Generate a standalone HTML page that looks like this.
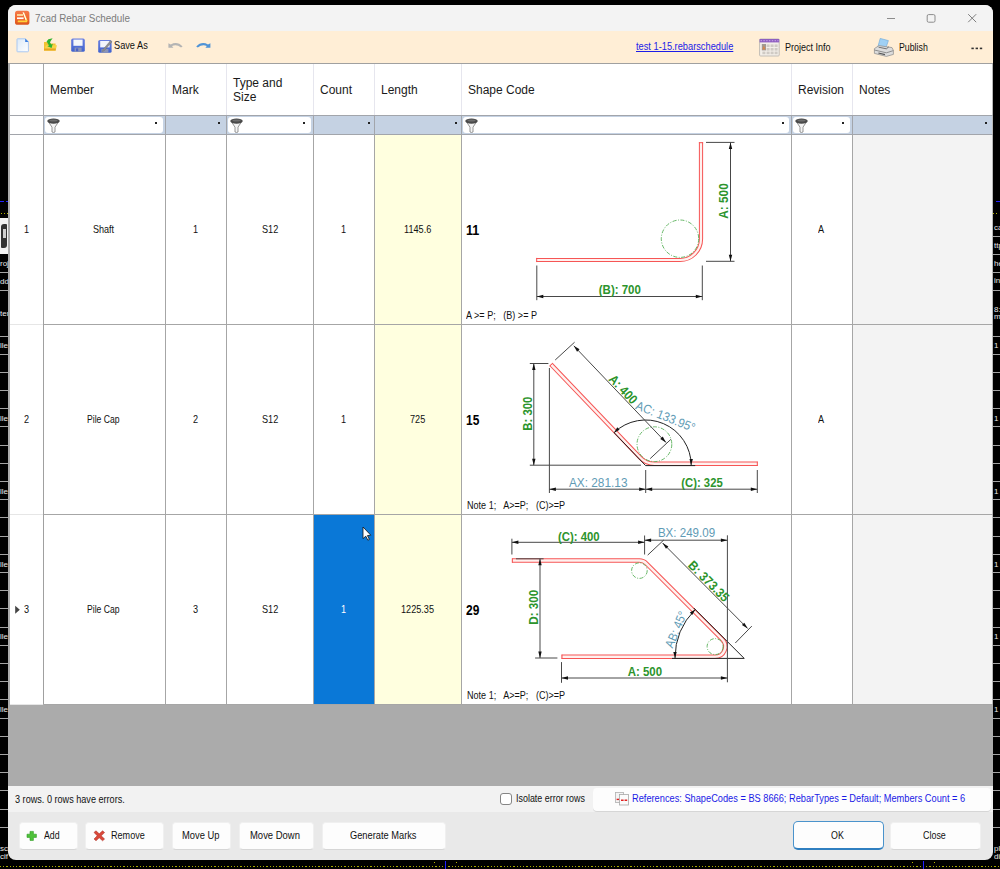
<!DOCTYPE html>
<html>
<head>
<meta charset="utf-8">
<title>7cad Rebar Schedule</title>
<style>
html,body{margin:0;padding:0;}
body{width:1000px;height:869px;background:#000;position:relative;overflow:hidden;font-family:"Liberation Sans",sans-serif;font-size:11px;color:#111;}
.abs{position:absolute;}
#win{position:absolute;left:8px;top:5px;width:985px;height:855px;background:#e9e9e9;border-radius:8px;overflow:hidden;}
#title{position:absolute;left:0;top:0;width:985px;height:26px;background:#f3f3f3;}
#tool{position:absolute;left:0;top:26px;width:985px;height:32px;background:#ffeed6;}
.v{position:absolute;width:1px;}
.h{position:absolute;height:1px;}
.hd{position:absolute;margin-top:0.4px;font-size:12px;color:#1a1a1a;line-height:14px;white-space:nowrap;}
.tx{position:absolute;white-space:pre;line-height:1;transform-origin:0 0;}
.btn{position:absolute;box-sizing:border-box;background:#fdfdfd;border:1px solid #f0f0f0;border-bottom-color:#d6d6d6;border-radius:4px;}
.fbox{position:absolute;background:#fff;border-radius:3px;height:16px;top:117px;}
.dot{position:absolute;width:2px;height:2px;background:#222;top:122px;}
svg{position:absolute;left:0;top:0;overflow:visible;}
svg text{font-family:"Liberation Sans",sans-serif;}
</style>
</head>
<body>
<div id="bg">
<div class="abs" style="left:0;top:866px;width:1000px;height:1px;background:repeating-linear-gradient(90deg,#a8a800 0,#a8a800 1.2px,#000 1.2px,#000 3.25px);"></div>
<div class="abs" style="left:923px;top:861px;width:1px;height:8px;background:#2020ff;"></div>
<div class="abs" style="left:445px;top:861px;width:1px;height:8px;background:#2020ff;"></div>
<div class="abs" style="left:434px;top:862px;width:1px;height:1px;background:#b4b400;"></div><div class="abs" style="left:456px;top:862px;width:1px;height:1px;background:#b4b400;"></div>
<div class="abs" style="left:912px;top:862px;width:1px;height:1px;background:#b4b400;"></div><div class="abs" style="left:934px;top:862px;width:1px;height:1px;background:#b4b400;"></div>
<div class="abs" style="left:0;top:201px;width:8px;height:1px;background:repeating-linear-gradient(90deg,#2222ff 0,#2222ff 4px,#000 4px,#000 6px);"></div>
<div class="abs" style="left:1px;top:213px;width:7px;height:1px;background:repeating-linear-gradient(90deg,#b4b400 0,#b4b400 1.5px,#000 1.5px,#000 3px);"></div>
<div class="abs" style="left:0;top:218px;width:8px;height:36px;background:#f2f2f2;"></div>
<div class="abs" style="left:1px;top:224px;width:6px;height:24px;background:#333;border-radius:3px 1px 3px 1px;"></div>
<div class="abs" style="left:3px;top:229px;width:3px;height:9px;background:#cfcfcf;"></div>
<div class="abs" style="left:0;top:272.4px;width:8px;height:1px;background:#a4a4a4;"></div>
<div class="abs" style="left:0;top:290.1px;width:8px;height:1px;background:#a4a4a4;"></div>
<div class="abs" style="left:0;top:336.0px;width:8px;height:1px;background:#a4a4a4;"></div>
<div class="abs" style="left:0;top:353.5px;width:8px;height:1px;background:#a4a4a4;"></div>
<div class="abs" style="left:0;top:371.7px;width:8px;height:1px;background:#a4a4a4;"></div>
<div class="abs" style="left:0;top:389.9px;width:8px;height:1px;background:#a4a4a4;"></div>
<div class="abs" style="left:0;top:408.1px;width:8px;height:1px;background:#a4a4a4;"></div>
<div class="abs" style="left:0;top:426.3px;width:8px;height:1px;background:#a4a4a4;"></div>
<div class="abs" style="left:0;top:444.5px;width:8px;height:1px;background:#a4a4a4;"></div>
<div class="abs" style="left:0;top:462.7px;width:8px;height:1px;background:#a4a4a4;"></div>
<div class="abs" style="left:0;top:480.9px;width:8px;height:1px;background:#a4a4a4;"></div>
<div class="abs" style="left:0;top:499.1px;width:8px;height:1px;background:#a4a4a4;"></div>
<div class="abs" style="left:0;top:517.3px;width:8px;height:1px;background:#a4a4a4;"></div>
<div class="abs" style="left:0;top:535.5px;width:8px;height:1px;background:#a4a4a4;"></div>
<div class="abs" style="left:0;top:553.7px;width:8px;height:1px;background:#a4a4a4;"></div>
<div class="abs" style="left:0;top:571.9px;width:8px;height:1px;background:#a4a4a4;"></div>
<div class="abs" style="left:0;top:590.1px;width:8px;height:1px;background:#a4a4a4;"></div>
<div class="abs" style="left:0;top:608.3px;width:8px;height:1px;background:#a4a4a4;"></div>
<div class="abs" style="left:0;top:626.5px;width:8px;height:1px;background:#a4a4a4;"></div>
<div class="abs" style="left:0;top:644.7px;width:8px;height:1px;background:#a4a4a4;"></div>
<div class="abs" style="left:0;top:662.9px;width:8px;height:1px;background:#a4a4a4;"></div>
<div class="abs" style="left:0;top:681.1px;width:8px;height:1px;background:#a4a4a4;"></div>
<div class="abs" style="left:0;top:699.3px;width:8px;height:1px;background:#a4a4a4;"></div>
<div class="abs" style="left:0;top:717.5px;width:8px;height:1px;background:#a4a4a4;"></div>
<div class="abs" style="left:0;top:735.7px;width:8px;height:1px;background:#a4a4a4;"></div>
<div class="abs" style="left:0;top:753.9px;width:8px;height:1px;background:#a4a4a4;"></div>
<div class="abs" style="left:0;top:772.1px;width:8px;height:1px;background:#a4a4a4;"></div>
<div class="abs" style="left:0;top:790.3px;width:8px;height:1px;background:#a4a4a4;"></div>
<div class="abs" style="left:0;top:808.5px;width:8px;height:1px;background:#a4a4a4;"></div>
<div class="abs" style="left:0;top:826.7px;width:8px;height:1px;background:#a4a4a4;"></div>
<div class="abs" style="left:0;top:259.0px;width:8px;overflow:hidden;font-size:8px;line-height:9px;color:#e8e8e8;white-space:nowrap;">roj</div>
<div class="abs" style="left:0;top:277.0px;width:8px;overflow:hidden;font-size:8px;line-height:9px;color:#e8e8e8;white-space:nowrap;">dd</div>
<div class="abs" style="left:0;top:309.0px;width:8px;overflow:hidden;font-size:8px;line-height:9px;color:#e8e8e8;white-space:nowrap;">ten</div>
<div class="abs" style="left:0;top:341.0px;width:8px;overflow:hidden;font-size:8px;line-height:9px;color:#e8e8e8;white-space:nowrap;">lle</div>
<div class="abs" style="left:0;top:414.0px;width:8px;overflow:hidden;font-size:8px;line-height:9px;color:#e8e8e8;white-space:nowrap;">lle</div>
<div class="abs" style="left:0;top:486.8px;width:8px;overflow:hidden;font-size:8px;line-height:9px;color:#e8e8e8;white-space:nowrap;">lle</div>
<div class="abs" style="left:0;top:559.6px;width:8px;overflow:hidden;font-size:8px;line-height:9px;color:#e8e8e8;white-space:nowrap;">lle</div>
<div class="abs" style="left:0;top:632.4px;width:8px;overflow:hidden;font-size:8px;line-height:9px;color:#e8e8e8;white-space:nowrap;">lle</div>
<div class="abs" style="left:0;top:705.2px;width:8px;overflow:hidden;font-size:8px;line-height:9px;color:#e8e8e8;white-space:nowrap;">lle</div>
<div class="abs" style="left:0;top:844.0px;width:8px;overflow:hidden;font-size:8px;line-height:9px;color:#e8e8e8;white-space:nowrap;">sch</div>
<div class="abs" style="left:0;top:852.0px;width:8px;overflow:hidden;font-size:8px;line-height:9px;color:#e8e8e8;white-space:nowrap;">cif</div>
<div class="abs" style="left:996px;top:201px;width:4px;height:1px;background:#2222ff;"></div>
<div class="abs" style="left:993px;top:213px;width:6px;height:1px;background:repeating-linear-gradient(90deg,#b4b400 0,#b4b400 1.5px,#000 1.5px,#000 3px);"></div>
<div class="abs" style="left:993px;top:236.1px;width:7px;height:1px;background:#a4a4a4;"></div>
<div class="abs" style="left:993px;top:254.1px;width:7px;height:1px;background:#a4a4a4;"></div>
<div class="abs" style="left:993px;top:272.3px;width:7px;height:1px;background:#a4a4a4;"></div>
<div class="abs" style="left:993px;top:290.3px;width:7px;height:1px;background:#a4a4a4;"></div>
<div class="abs" style="left:993px;top:336.1px;width:7px;height:1px;background:#a4a4a4;"></div>
<div class="abs" style="left:993px;top:353.5px;width:7px;height:1px;background:#a4a4a4;"></div>
<div class="abs" style="left:993px;top:371.7px;width:7px;height:1px;background:#a4a4a4;"></div>
<div class="abs" style="left:993px;top:389.9px;width:7px;height:1px;background:#a4a4a4;"></div>
<div class="abs" style="left:993px;top:408.1px;width:7px;height:1px;background:#a4a4a4;"></div>
<div class="abs" style="left:993px;top:426.3px;width:7px;height:1px;background:#a4a4a4;"></div>
<div class="abs" style="left:993px;top:444.5px;width:7px;height:1px;background:#a4a4a4;"></div>
<div class="abs" style="left:993px;top:462.7px;width:7px;height:1px;background:#a4a4a4;"></div>
<div class="abs" style="left:993px;top:480.9px;width:7px;height:1px;background:#a4a4a4;"></div>
<div class="abs" style="left:993px;top:499.1px;width:7px;height:1px;background:#a4a4a4;"></div>
<div class="abs" style="left:993px;top:517.3px;width:7px;height:1px;background:#a4a4a4;"></div>
<div class="abs" style="left:993px;top:535.5px;width:7px;height:1px;background:#a4a4a4;"></div>
<div class="abs" style="left:993px;top:553.7px;width:7px;height:1px;background:#a4a4a4;"></div>
<div class="abs" style="left:993px;top:571.9px;width:7px;height:1px;background:#a4a4a4;"></div>
<div class="abs" style="left:993px;top:590.1px;width:7px;height:1px;background:#a4a4a4;"></div>
<div class="abs" style="left:993px;top:608.3px;width:7px;height:1px;background:#a4a4a4;"></div>
<div class="abs" style="left:993px;top:626.5px;width:7px;height:1px;background:#a4a4a4;"></div>
<div class="abs" style="left:993px;top:644.7px;width:7px;height:1px;background:#a4a4a4;"></div>
<div class="abs" style="left:993px;top:662.9px;width:7px;height:1px;background:#a4a4a4;"></div>
<div class="abs" style="left:993px;top:681.1px;width:7px;height:1px;background:#a4a4a4;"></div>
<div class="abs" style="left:993px;top:699.3px;width:7px;height:1px;background:#a4a4a4;"></div>
<div class="abs" style="left:993px;top:717.5px;width:7px;height:1px;background:#a4a4a4;"></div>
<div class="abs" style="left:993px;top:735.7px;width:7px;height:1px;background:#a4a4a4;"></div>
<div class="abs" style="left:993px;top:753.9px;width:7px;height:1px;background:#a4a4a4;"></div>
<div class="abs" style="left:993px;top:772.1px;width:7px;height:1px;background:#a4a4a4;"></div>
<div class="abs" style="left:993px;top:790.3px;width:7px;height:1px;background:#a4a4a4;"></div>
<div class="abs" style="left:993px;top:808.5px;width:7px;height:1px;background:#a4a4a4;"></div>
<div class="abs" style="left:993px;top:826.7px;width:7px;height:1px;background:#a4a4a4;"></div>
<div class="abs" style="left:994px;top:223.0px;width:6px;overflow:hidden;font-size:8px;line-height:9px;color:#e8e8e8;white-space:nowrap;">cae</div>
<div class="abs" style="left:994px;top:241.0px;width:6px;overflow:hidden;font-size:8px;line-height:9px;color:#e8e8e8;white-space:nowrap;">ttp</div>
<div class="abs" style="left:994px;top:259.0px;width:6px;overflow:hidden;font-size:8px;line-height:9px;color:#e8e8e8;white-space:nowrap;">he</div>
<div class="abs" style="left:994px;top:276.0px;width:6px;overflow:hidden;font-size:8px;line-height:9px;color:#e8e8e8;white-space:nowrap;">inl</div>
<div class="abs" style="left:994px;top:305.0px;width:6px;overflow:hidden;font-size:8px;line-height:9px;color:#e8e8e8;white-space:nowrap;">8:</div>
<div class="abs" style="left:994px;top:312.0px;width:6px;overflow:hidden;font-size:8px;line-height:9px;color:#e8e8e8;white-space:nowrap;">ma</div>
<div class="abs" style="left:994px;top:341.0px;width:6px;overflow:hidden;font-size:8px;line-height:9px;color:#e8e8e8;white-space:nowrap;">1</div>
<div class="abs" style="left:994px;top:414.0px;width:6px;overflow:hidden;font-size:8px;line-height:9px;color:#e8e8e8;white-space:nowrap;">1</div>
<div class="abs" style="left:994px;top:486.8px;width:6px;overflow:hidden;font-size:8px;line-height:9px;color:#e8e8e8;white-space:nowrap;">1</div>
<div class="abs" style="left:994px;top:559.6px;width:6px;overflow:hidden;font-size:8px;line-height:9px;color:#e8e8e8;white-space:nowrap;">1</div>
<div class="abs" style="left:994px;top:632.4px;width:6px;overflow:hidden;font-size:8px;line-height:9px;color:#e8e8e8;white-space:nowrap;">1</div>
<div class="abs" style="left:994px;top:705.2px;width:6px;overflow:hidden;font-size:8px;line-height:9px;color:#e8e8e8;white-space:nowrap;">1</div>
<div class="abs" style="left:994px;top:844.0px;width:6px;overflow:hidden;font-size:8px;line-height:9px;color:#e8e8e8;white-space:nowrap;">pl</div>
<div class="abs" style="left:994px;top:852.0px;width:6px;overflow:hidden;font-size:8px;line-height:9px;color:#e8e8e8;white-space:nowrap;">dis</div>
</div>

<div id="win"><div id="title"></div><div id="tool"></div></div>
<div class="abs" style="left:8px;top:63px;width:985px;height:723px;background:#ababab;"></div>
<div class="abs" style="left:8px;top:63px;width:985px;height:1px;background:#a0a0a0;"></div>
<div class="abs" style="left:10px;top:64px;width:983px;height:51px;background:#fff;"></div>
<div class="abs" style="left:10px;top:115px;width:983px;height:20px;background:#c5d2e3;"></div>
<div class="abs" style="left:10px;top:116px;width:33px;height:18px;background:#fff;"></div>
<div class="abs" style="left:10px;top:135px;width:983px;height:569px;background:#fff;"></div>
<div class="abs" style="left:375px;top:135px;width:86px;height:569px;background:#ffffdf;"></div>
<div class="abs" style="left:853px;top:135px;width:140px;height:569px;background:#f3f3f3;"></div>
<div class="v" style="left:992px;top:64px;height:640px;background:#b8b8b8;"></div>
<div class="abs" style="left:314px;top:515px;width:60px;height:189px;background:#0a78d7;"></div>
<div class="v" style="left:43px;top:64px;height:51px;background:#a8a8a8;"></div>
<div class="v" style="left:165px;top:64px;height:51px;background:#e6e6ee;"></div>
<div class="v" style="left:226px;top:64px;height:51px;background:#e6e6ee;"></div>
<div class="v" style="left:313px;top:64px;height:51px;background:#e6e6ee;"></div>
<div class="v" style="left:374px;top:64px;height:51px;background:#e6e6ee;"></div>
<div class="v" style="left:461px;top:64px;height:51px;background:#e6e6ee;"></div>
<div class="v" style="left:791px;top:64px;height:51px;background:#e6e6ee;"></div>
<div class="v" style="left:852px;top:64px;height:51px;background:#e6e6ee;"></div>
<div class="h" style="left:10px;top:115px;width:983px;background:#a2a5ab;"></div>
<div class="h" style="left:10px;top:134px;width:983px;background:#a2a5ab;"></div>
<div class="v" style="left:43px;top:115px;height:20px;background:#a2a5ab;"></div>
<div class="v" style="left:165px;top:115px;height:20px;background:#a2a5ab;"></div>
<div class="v" style="left:226px;top:115px;height:20px;background:#a2a5ab;"></div>
<div class="v" style="left:313px;top:115px;height:20px;background:#a2a5ab;"></div>
<div class="v" style="left:374px;top:115px;height:20px;background:#a2a5ab;"></div>
<div class="v" style="left:461px;top:115px;height:20px;background:#a2a5ab;"></div>
<div class="v" style="left:791px;top:115px;height:20px;background:#a2a5ab;"></div>
<div class="v" style="left:852px;top:115px;height:20px;background:#a2a5ab;"></div>
<div class="v" style="left:43px;top:135px;height:569px;background:#a0a0a0;"></div>
<div class="v" style="left:165px;top:135px;height:569px;background:#a6a6a6;"></div>
<div class="v" style="left:226px;top:135px;height:569px;background:#a6a6a6;"></div>
<div class="v" style="left:313px;top:135px;height:569px;background:#a6a6a6;"></div>
<div class="v" style="left:374px;top:135px;height:569px;background:#a6a6a6;"></div>
<div class="v" style="left:461px;top:135px;height:569px;background:#a6a6a6;"></div>
<div class="v" style="left:791px;top:135px;height:569px;background:#a6a6a6;"></div>
<div class="v" style="left:852px;top:135px;height:569px;background:#a6a6a6;"></div>
<div class="h" style="left:10px;top:324px;width:33px;background:#e6e6e6;"></div>
<div class="h" style="left:44px;top:324px;width:949px;background:#a6a6a6;"></div>
<div class="h" style="left:10px;top:514px;width:33px;background:#e6e6e6;"></div>
<div class="h" style="left:44px;top:514px;width:949px;background:#a6a6a6;"></div>
<div class="h" style="left:10px;top:704px;width:33px;background:#e6e6e6;"></div>
<div class="h" style="left:44px;top:704px;width:949px;background:#a6a6a6;"></div>
<div class="fbox" style="left:45px;width:118px;"></div>
<div class="fbox" style="left:228px;width:83px;"></div>
<div class="fbox" style="left:463px;width:326px;"></div>
<div class="fbox" style="left:793px;width:57px;"></div>
<div class="dot" style="left:155px;"></div>
<div class="dot" style="left:218px;"></div>
<div class="dot" style="left:303px;"></div>
<div class="dot" style="left:368px;"></div>
<div class="dot" style="left:455px;"></div>
<div class="dot" style="left:782px;"></div>
<div class="dot" style="left:842px;"></div>
<div class="dot" style="left:985px;"></div>
<div class="hd" style="left:50px;top:83px;">Member</div>
<div class="hd" style="left:172px;top:83px;">Mark</div>
<div class="hd" style="left:233px;top:76px;">Type and<br>Size</div>
<div class="hd" style="left:320px;top:83px;">Count</div>
<div class="hd" style="left:381px;top:83px;">Length</div>
<div class="hd" style="left:468px;top:83px;">Shape Code</div>
<div class="hd" style="left:798px;top:83px;">Revision</div>
<div class="hd" style="left:859px;top:83px;">Notes</div>
<div class="abs" style="left:8px;top:786px;width:985px;height:26px;background:#f2f2f2;"></div>
<div class="abs" style="left:499.5px;top:793px;width:10px;height:10px;border:1px solid #858585;border-radius:3px;background:#fff;"></div>
<div class="abs" style="left:593px;top:788px;width:398px;height:23px;background:#fdfdfd;border-radius:4px;box-shadow:0 1px 0 #d6d6d6;"></div>
<div class="btn" style="left:19px;top:821.5px;width:58.599999999999994px;height:28.5px;"></div>
<div class="btn" style="left:85.4px;top:821.5px;width:79.0px;height:28.5px;"></div>
<div class="btn" style="left:172.3px;top:821.5px;width:58.39999999999998px;height:28.5px;"></div>
<div class="btn" style="left:238.6px;top:821.5px;width:75.79999999999998px;height:28.5px;"></div>
<div class="btn" style="left:322.4px;top:821.5px;width:124.0px;height:28.5px;"></div>
<div class="btn" style="left:890px;top:821.5px;width:91px;height:28.5px;"></div>
<div class="btn" style="left:793px;top:821px;width:91.4px;height:29.4px;border:1px solid #4a93cc;border-bottom:2px solid #2f7fc0;border-radius:5px;"></div>
<div class="tx" style="left:23.96px;top:224.19px;font-size:11px;color:#111;font-weight:400;transform:scaleX(0.8300);">1</div>
<div class="tx" style="left:92.80px;top:224.19px;font-size:11px;color:#111;font-weight:400;transform:scaleX(0.8214);">Shaft</div>
<div class="tx" style="left:193.26px;top:224.19px;font-size:11px;color:#111;font-weight:400;transform:scaleX(0.8300);">1</div>
<div class="tx" style="left:261.58px;top:224.19px;font-size:11px;color:#111;font-weight:400;transform:scaleX(0.8300);">S12</div>
<div class="tx" style="left:341.26px;top:224.19px;font-size:11px;color:#111;font-weight:400;transform:scaleX(0.8300);">1</div>
<div class="tx" style="left:404.18px;top:224.19px;font-size:11px;color:#111;font-weight:400;transform:scaleX(0.8300);">1145.6</div>
<div class="tx" style="left:466.00px;top:223.45px;font-size:14px;color:#000;font-weight:700;transform:scaleX(0.8979);">11</div>
<div class="tx" style="left:818.45px;top:224.19px;font-size:11px;color:#111;font-weight:400;transform:scaleX(0.8300);">A</div>
<div class="tx" style="left:23.96px;top:414.19px;font-size:11px;color:#111;font-weight:400;transform:scaleX(0.8300);">2</div>
<div class="tx" style="left:87.30px;top:414.19px;font-size:11px;color:#111;font-weight:400;transform:scaleX(0.7841);">Pile Cap</div>
<div class="tx" style="left:193.26px;top:414.19px;font-size:11px;color:#111;font-weight:400;transform:scaleX(0.8300);">2</div>
<div class="tx" style="left:261.58px;top:414.19px;font-size:11px;color:#111;font-weight:400;transform:scaleX(0.8300);">S12</div>
<div class="tx" style="left:341.26px;top:414.19px;font-size:11px;color:#111;font-weight:400;transform:scaleX(0.8300);">1</div>
<div class="tx" style="left:410.18px;top:414.19px;font-size:11px;color:#111;font-weight:400;transform:scaleX(0.8300);">725</div>
<div class="tx" style="left:466.00px;top:413.45px;font-size:14px;color:#000;font-weight:700;transform:scaleX(0.8538);">15</div>
<div class="tx" style="left:818.45px;top:414.19px;font-size:11px;color:#111;font-weight:400;transform:scaleX(0.8300);">A</div>
<div class="tx" style="left:23.96px;top:604.19px;font-size:11px;color:#111;font-weight:400;transform:scaleX(0.8300);">3</div>
<div class="tx" style="left:87.30px;top:604.19px;font-size:11px;color:#111;font-weight:400;transform:scaleX(0.7841);">Pile Cap</div>
<div class="tx" style="left:193.26px;top:604.19px;font-size:11px;color:#111;font-weight:400;transform:scaleX(0.8300);">3</div>
<div class="tx" style="left:261.58px;top:604.19px;font-size:11px;color:#111;font-weight:400;transform:scaleX(0.8300);">S12</div>
<div class="tx" style="left:341.26px;top:604.19px;font-size:11px;color:#fff;font-weight:400;transform:scaleX(0.8300);">1</div>
<div class="tx" style="left:401.30px;top:604.19px;font-size:11px;color:#111;font-weight:400;transform:scaleX(0.8300);">1225.35</div>
<div class="tx" style="left:466.00px;top:603.45px;font-size:14px;color:#000;font-weight:700;transform:scaleX(0.8538);">29</div>
<div class="tx" style="left:466.30px;top:309.89px;font-size:11px;color:#111;font-weight:400;transform:scaleX(0.8235);">A &gt;= P;   (B) &gt;= P</div>
<div class="tx" style="left:466.70px;top:499.89px;font-size:11px;color:#111;font-weight:400;transform:scaleX(0.8227);">Note 1;   A&gt;=P;   (C)&gt;=P</div>
<div class="tx" style="left:466.70px;top:689.89px;font-size:11px;color:#111;font-weight:400;transform:scaleX(0.8227);">Note 1;   A&gt;=P;   (C)&gt;=P</div>
<div class="tx" style="left:34.60px;top:12.97px;font-size:11.5px;color:#7b7b7b;font-weight:400;transform:scaleX(0.8589);">7cad Rebar Schedule</div>
<div class="tx" style="left:114.20px;top:39.99px;font-size:11px;color:#111;font-weight:400;transform:scaleX(0.8375);">Save As</div>
<div class="tx" style="left:636.40px;top:41.09px;font-size:11px;color:#1c1ce8;font-weight:400;transform:scaleX(0.8419);text-decoration:underline;">test 1-15.rebarschedule</div>
<div class="tx" style="left:784.80px;top:42.09px;font-size:11px;color:#111;font-weight:400;transform:scaleX(0.8195);">Project Info</div>
<div class="tx" style="left:898.80px;top:42.09px;font-size:11px;color:#111;font-weight:400;transform:scaleX(0.7983);">Publish</div>
<div class="tx" style="left:14.50px;top:794.39px;font-size:11px;color:#111;font-weight:400;transform:scaleX(0.8277);">3 rows. 0 rows have errors.</div>
<div class="tx" style="left:516.40px;top:792.99px;font-size:11px;color:#111;font-weight:400;transform:scaleX(0.8107);">Isolate error rows</div>
<div class="tx" style="left:632.00px;top:793.29px;font-size:11px;color:#1a1ae6;font-weight:400;transform:scaleX(0.8403);">References: ShapeCodes = BS 8666; RebarTypes = Default; Members Count = 6</div>
<div class="tx" style="left:44.30px;top:829.89px;font-size:11px;color:#111;font-weight:400;transform:scaleX(0.7968);">Add</div>
<div class="tx" style="left:111.30px;top:829.89px;font-size:11px;color:#111;font-weight:400;transform:scaleX(0.8250);">Remove</div>
<div class="tx" style="left:181.80px;top:829.89px;font-size:11px;color:#111;font-weight:400;transform:scaleX(0.8517);">Move Up</div>
<div class="tx" style="left:250.40px;top:829.89px;font-size:11px;color:#111;font-weight:400;transform:scaleX(0.8592);">Move Down</div>
<div class="tx" style="left:350.00px;top:829.89px;font-size:11px;color:#111;font-weight:400;transform:scaleX(0.8431);">Generate Marks</div>
<div class="tx" style="left:831.20px;top:829.89px;font-size:11px;color:#111;font-weight:400;transform:scaleX(0.8047);">OK</div>
<div class="tx" style="left:923.20px;top:829.89px;font-size:11px;color:#111;font-weight:400;transform:scaleX(0.8107);">Close</div>
<svg id="shapes" width="1000" height="869" viewBox="0 0 1000 869">
<path d="M536.2,260 L680,260 A21,21 0 0 0 701,239 L701,142.2" fill="none" stroke="#f65555" stroke-width="4.2" stroke-linejoin="round"/>
<path d="M536.2,260 L680,260 A21,21 0 0 0 701,239 L701,142.2" fill="none" stroke="#fff1ef" stroke-width="2.2" stroke-linejoin="round"/>
<line x1="536.70" y1="257.90" x2="536.70" y2="262.10" stroke="#f65555" stroke-width="1"/>
<line x1="703.10" y1="142.70" x2="698.90" y2="142.70" stroke="#f65555" stroke-width="1"/>
<circle cx="680" cy="238.7" r="18.7" fill="none" stroke="#58b058" stroke-width="0.9" stroke-dasharray="4 1.5 1 1.5"/>
<line x1="706.00" y1="142.40" x2="734.50" y2="142.40" stroke="#484848" stroke-width="1"/>
<line x1="706.00" y1="261.30" x2="734.50" y2="261.30" stroke="#484848" stroke-width="1"/>
<line x1="730.50" y1="142.40" x2="730.50" y2="261.30" stroke="#484848" stroke-width="1"/>
<polygon points="730.50,142.40 732.20,148.90 728.80,148.90" fill="#111"/>
<polygon points="730.50,261.30 728.80,254.80 732.20,254.80" fill="#111"/>
<text transform="translate(728.30,201.00) rotate(-90)" text-anchor="middle" font-size="13" font-weight="bold" fill="#2c942c" textLength="35.5" lengthAdjust="spacingAndGlyphs">A: 500</text>
<line x1="536.80" y1="265.50" x2="536.80" y2="300.20" stroke="#484848" stroke-width="1"/>
<line x1="702.30" y1="265.50" x2="702.30" y2="300.20" stroke="#484848" stroke-width="1"/>
<line x1="536.80" y1="296.50" x2="702.30" y2="296.50" stroke="#484848" stroke-width="1"/>
<polygon points="536.80,296.50 543.30,294.80 543.30,298.20" fill="#111"/>
<polygon points="702.30,296.50 695.80,298.20 695.80,294.80" fill="#111"/>
<text transform="translate(619.80,294.00) rotate(0)" text-anchor="middle" font-size="13" font-weight="bold" fill="#2c942c" textLength="42.0" lengthAdjust="spacingAndGlyphs">(B): 700</text>
<path d="M550.90,364.30 L640.23,457.74 A19.6,19.6 0 0 0 654.4,463.8 L757.8,463.8" fill="none" stroke="#f65555" stroke-width="4.5" stroke-linejoin="round"/>
<path d="M550.90,364.30 L640.23,457.74 A19.6,19.6 0 0 0 654.4,463.8 L757.8,463.8" fill="none" stroke="#fff1ef" stroke-width="2.5" stroke-linejoin="round"/>
<line x1="552.76" y1="363.21" x2="549.73" y2="366.11" stroke="#f65555" stroke-width="1"/>
<line x1="757.30" y1="465.90" x2="757.30" y2="461.70" stroke="#f65555" stroke-width="1"/>
<circle cx="654.4" cy="444.2" r="17.4" fill="none" stroke="#58b058" stroke-width="0.9" stroke-dasharray="4 1.5 1 1.5"/>
<line x1="645.60" y1="465.60" x2="614.09" y2="432.64" stroke="#222" stroke-width="1"/>
<line x1="645.60" y1="465.60" x2="695.20" y2="465.60" stroke="#222" stroke-width="1"/>
<path d="M614.09,432.64 A45.6,45.6 0 0 1 691.20,465.60" fill="none" stroke="#222" stroke-width="1"/>
<polygon points="614.09,432.64 617.25,427.26 619.60,429.72" fill="#111"/>
<polygon points="691.20,465.10 689.50,459.10 692.90,459.10" fill="#111"/>
<line x1="529.80" y1="363.50" x2="548.40" y2="363.50" stroke="#484848" stroke-width="1"/>
<line x1="529.80" y1="465.20" x2="641.00" y2="465.20" stroke="#484848" stroke-width="1"/>
<line x1="533.80" y1="363.50" x2="533.80" y2="465.20" stroke="#484848" stroke-width="1"/>
<polygon points="533.80,363.50 535.50,370.00 532.10,370.00" fill="#111"/>
<polygon points="533.80,465.20 532.10,458.70 535.50,458.70" fill="#111"/>
<text transform="translate(532.00,413.70) rotate(-90)" text-anchor="middle" font-size="13" font-weight="bold" fill="#2c942c" textLength="34.0" lengthAdjust="spacingAndGlyphs">B: 300</text>
<line x1="549.40" y1="368.00" x2="549.40" y2="493.00" stroke="#484848" stroke-width="1"/>
<line x1="645.70" y1="470.00" x2="645.70" y2="493.00" stroke="#484848" stroke-width="1"/>
<line x1="757.30" y1="470.00" x2="757.30" y2="493.00" stroke="#484848" stroke-width="1"/>
<line x1="549.40" y1="489.20" x2="645.70" y2="489.20" stroke="#484848" stroke-width="1"/>
<polygon points="549.40,489.20 555.90,487.50 555.90,490.90" fill="#111"/>
<polygon points="645.70,489.20 639.20,490.90 639.20,487.50" fill="#111"/>
<line x1="645.70" y1="489.20" x2="757.30" y2="489.20" stroke="#484848" stroke-width="1"/>
<polygon points="645.70,489.20 652.20,487.50 652.20,490.90" fill="#111"/>
<polygon points="757.30,489.20 750.80,490.90 750.80,487.50" fill="#111"/>
<text transform="translate(598.20,487.00) rotate(0)" text-anchor="middle" font-size="12.5" font-weight="normal" fill="#5f9bb5" textLength="58.6" lengthAdjust="spacingAndGlyphs">AX: 281.13</text>
<text transform="translate(702.00,487.20) rotate(0)" text-anchor="middle" font-size="13" font-weight="bold" fill="#2c942c" textLength="41.4" lengthAdjust="spacingAndGlyphs">(C): 325</text>
<line x1="555.20" y1="360.00" x2="574.60" y2="342.20" stroke="#484848" stroke-width="1"/>
<line x1="650.20" y1="458.60" x2="670.80" y2="439.40" stroke="#484848" stroke-width="1"/>
<line x1="573.80" y1="345.80" x2="666.00" y2="442.50" stroke="#484848" stroke-width="1"/>
<polygon points="573.80,345.80 579.52,349.33 577.06,351.68" fill="#111"/>
<polygon points="666.00,442.50 660.28,438.97 662.74,436.62" fill="#111"/>
<text transform="translate(619.97,392.38) rotate(46.3)" text-anchor="middle" font-size="13" font-weight="bold" fill="#2c942c" textLength="35.0" lengthAdjust="spacingAndGlyphs">A: 400</text>
<text transform="translate(663.89,420.49) rotate(22)" text-anchor="middle" font-size="12.5" font-weight="normal" fill="#5f9bb5" textLength="63.0" lengthAdjust="spacingAndGlyphs">AC: 133.95°</text>
<path d="M511.9,560.60 L639.4,560.60 A10,10 0 0 1 646.47,563.53 L722.31,639.39 A10.2,10.2 0 0 1 715.1,656.80 L561.5,656.80" fill="none" stroke="#f65555" stroke-width="4.5" stroke-linejoin="round"/>
<path d="M511.9,560.60 L639.4,560.60 A10,10 0 0 1 646.47,563.53 L722.31,639.39 A10.2,10.2 0 0 1 715.1,656.80 L561.5,656.80" fill="none" stroke="#fff1ef" stroke-width="2.5" stroke-linejoin="round"/>
<line x1="512.40" y1="558.50" x2="512.40" y2="562.70" stroke="#f65555" stroke-width="1"/>
<line x1="562.00" y1="654.70" x2="562.00" y2="658.90" stroke="#f65555" stroke-width="1"/>
<circle cx="639.4" cy="570.6" r="7.8" fill="none" stroke="#58b058" stroke-width="0.9" stroke-dasharray="4 1.5 1 1.5"/>
<circle cx="715.1" cy="646.6" r="8" fill="none" stroke="#58b058" stroke-width="0.9" stroke-dasharray="4 1.5 1 1.5"/>
<line x1="744.20" y1="658.40" x2="693.77" y2="607.97" stroke="#222" stroke-width="1"/>
<line x1="744.20" y1="658.40" x2="672.00" y2="658.40" stroke="#222" stroke-width="1"/>
<path d="M675.00,658.40 A69.2,69.2 0 0 1 695.27,609.47" fill="none" stroke="#222" stroke-width="1"/>
<polygon points="675.00,657.90 673.30,651.90 676.70,651.90" fill="#111"/>
<polygon points="695.27,609.47 692.23,614.91 689.82,612.51" fill="#111"/>
<text transform="translate(679.87,631.25) rotate(-67.4)" text-anchor="middle" font-size="12.5" font-weight="normal" fill="#5f9bb5" textLength="38.0" lengthAdjust="spacingAndGlyphs">AB: 45°</text>
<line x1="511.90" y1="538.70" x2="511.90" y2="554.50" stroke="#484848" stroke-width="1"/>
<line x1="644.60" y1="535.50" x2="644.60" y2="554.50" stroke="#484848" stroke-width="1"/>
<line x1="511.90" y1="542.30" x2="644.60" y2="542.30" stroke="#484848" stroke-width="1"/>
<polygon points="511.90,542.30 518.40,540.60 518.40,544.00" fill="#111"/>
<polygon points="644.60,542.30 638.10,544.00 638.10,540.60" fill="#111"/>
<text transform="translate(578.80,540.90) rotate(0)" text-anchor="middle" font-size="13" font-weight="bold" fill="#2c942c" textLength="41.7" lengthAdjust="spacingAndGlyphs">(C): 400</text>
<line x1="727.40" y1="535.30" x2="727.40" y2="682.30" stroke="#484848" stroke-width="1"/>
<line x1="644.60" y1="540.20" x2="727.40" y2="540.20" stroke="#484848" stroke-width="1"/>
<polygon points="644.60,540.20 651.10,538.50 651.10,541.90" fill="#111"/>
<polygon points="727.40,540.20 720.90,541.90 720.90,538.50" fill="#111"/>
<text transform="translate(686.50,537.40) rotate(0)" text-anchor="middle" font-size="12.5" font-weight="normal" fill="#5f9bb5" textLength="57.2" lengthAdjust="spacingAndGlyphs">BX: 249.09</text>
<line x1="516.00" y1="558.80" x2="543.60" y2="558.80" stroke="#484848" stroke-width="1"/>
<line x1="535.10" y1="658.00" x2="557.40" y2="658.00" stroke="#484848" stroke-width="1"/>
<line x1="540.00" y1="558.80" x2="540.00" y2="658.00" stroke="#484848" stroke-width="1"/>
<polygon points="540.00,558.80 541.70,565.30 538.30,565.30" fill="#111"/>
<polygon points="540.00,658.00 538.30,651.50 541.70,651.50" fill="#111"/>
<text transform="translate(538.40,607.20) rotate(-90)" text-anchor="middle" font-size="13" font-weight="bold" fill="#2c942c" textLength="35.0" lengthAdjust="spacingAndGlyphs">D: 300</text>
<line x1="561.50" y1="662.10" x2="561.50" y2="682.80" stroke="#484848" stroke-width="1"/>
<line x1="561.50" y1="678.00" x2="727.40" y2="678.00" stroke="#484848" stroke-width="1"/>
<polygon points="561.50,678.00 568.00,676.30 568.00,679.70" fill="#111"/>
<polygon points="727.40,678.00 720.90,679.70 720.90,676.30" fill="#111"/>
<text transform="translate(644.90,676.00) rotate(0)" text-anchor="middle" font-size="13" font-weight="bold" fill="#2c942c" textLength="34.4" lengthAdjust="spacingAndGlyphs">A: 500</text>
<line x1="647.70" y1="555.10" x2="663.90" y2="539.90" stroke="#484848" stroke-width="1"/>
<line x1="735.30" y1="643.00" x2="751.80" y2="626.10" stroke="#484848" stroke-width="1"/>
<line x1="662.60" y1="543.00" x2="747.70" y2="628.50" stroke="#484848" stroke-width="1"/>
<polygon points="662.60,543.00 668.39,546.41 665.98,548.81" fill="#111"/>
<polygon points="747.70,628.50 741.91,625.09 744.32,622.69" fill="#111"/>
<text transform="translate(705.55,584.35) rotate(45)" text-anchor="middle" font-size="13" font-weight="bold" fill="#2c942c" textLength="52.0" lengthAdjust="spacingAndGlyphs">B: 373.35</text>
</svg>

<svg id="icons" width="1000" height="869" viewBox="0 0 1000 869">
<defs>
<linearGradient id="gOr" x1="0" y1="0" x2="0" y2="1"><stop offset="0" stop-color="#f47a4a"/><stop offset="0.55" stop-color="#f0662e"/><stop offset="1" stop-color="#d9541c"/></linearGradient>
<linearGradient id="gDoc" x1="0" y1="0" x2="1" y2="1"><stop offset="0" stop-color="#dbe9f8"/><stop offset="1" stop-color="#ffffff"/></linearGradient>
<linearGradient id="gFl" x1="0" y1="0" x2="0" y2="1"><stop offset="0" stop-color="#6a7fe0"/><stop offset="1" stop-color="#3f62cf"/></linearGradient>
<g id="funnel">
  <path d="M1.2,3.2 L5,9 L5,13.8 Q6.5,14.8 8,13.8 L8,9 L11.8,3.2 Z" fill="#f4f4f4" stroke="#8a8a8a" stroke-width="0.9"/>
  <ellipse cx="6.5" cy="2.9" rx="6.2" ry="2.7" fill="#4a4a4a"/>
  <ellipse cx="6.5" cy="2.3" rx="4" ry="1" fill="#6d6d6d"/>
</g>
</defs>
<!-- title icon -->
<rect x="15" y="10.8" width="14.4" height="14" rx="2.6" fill="url(#gOr)"/>
<rect x="17" y="14.2" width="6" height="1.6" fill="#ffe9a8"/>
<rect x="17" y="17.4" width="6.6" height="1.7" fill="#fff"/>
<path d="M17.5,22.2 L27,22.2 L27.6,20.4 L24.2,13 L22.8,12.6 L25.6,20.6 L18,20.6 Z" fill="#ffd23a"/>
<path d="M22.6,12.2 L24,12.6 L26.6,19.4 L25.6,20 Z" fill="#fff"/>
<!-- window controls -->
<line x1="887" y1="18.5" x2="895" y2="18.5" stroke="#8c8c8c" stroke-width="1"/>
<rect x="927.2" y="14.6" width="7.8" height="7.6" rx="1.4" fill="none" stroke="#8c8c8c" stroke-width="1"/>
<path d="M968.2,14.2 L976.2,22.2 M976.2,14.2 L968.2,22.2" stroke="#7e7e7e" stroke-width="1" fill="none"/>
<!-- new doc -->
<path d="M17.6,38.8 L25.4,38.8 L28.4,41.8 L28.4,51.2 Q28.4,51.8 27.8,51.8 L17.6,51.8 Q17,51.8 17,51.2 L17,39.4 Q17,38.8 17.6,38.8 Z" fill="url(#gDoc)" stroke="#a9c8f2" stroke-width="1"/>
<path d="M25.2,38.6 L28.6,42 L25.2,42 Z" fill="#3b7fe0"/>
<!-- open -->
<path d="M44,42 L47,42 L48.2,43.4 L55.6,43.4 L55.6,50.4 L44,50.4 Z" fill="#f2c230"/>
<path d="M44,50.4 L46,45.2 L57,45.2 L55.6,50.4 Z" fill="#f7d34a"/>
<path d="M44,48.6 L55.8,48.6 L55.6,50.6 L44,50.6 Z" fill="#e8a420"/>
<path d="M52.6,38.2 L48.4,39.2 L46.6,41.6 L49,45.4 L47.4,46.2 L51.6,48 L52.8,43.8 L51.2,44.6 L50,42.2 L51,40.6 Z" fill="#2fb32f"/>
<!-- save -->
<rect x="71.2" y="38.6" width="13.6" height="13.2" rx="1.6" fill="url(#gFl)"/>
<rect x="73.4" y="39.6" width="9.2" height="6.2" fill="#f4f6fb"/>
<rect x="74.6" y="47.6" width="7" height="4.2" fill="#8a94b8"/>
<rect x="76" y="48.4" width="2.2" height="2.8" fill="#4a62c8"/>
<!-- save as -->
<rect x="98.2" y="40" width="13.4" height="12.8" rx="1.6" fill="url(#gFl)"/>
<rect x="100.2" y="41" width="9.4" height="6.4" fill="#f4f6fb"/>
<rect x="101.4" y="49" width="7" height="3.8" fill="#8a94b8"/>
<path d="M110.6,40.6 L112,41.8 L104.4,50.6 L102.4,51.6 L103,49.4 Z" fill="#8e8e8e" stroke="#6a6a6a" stroke-width="0.4"/>
<!-- undo -->
<path d="M168.4,43.2 L168.4,47.8 L173.4,47.8 L172,46 Q176.6,43.8 181,47.6 L182.6,46.6 Q177.4,41 170.8,44.4 Z" fill="#b4b4b4"/>
<!-- redo -->
<path d="M210.4,43.2 L210.4,47.8 L205.4,47.8 L206.8,46 Q202.2,43.8 197.8,47.6 L196.2,46.6 Q201.4,41 208,44.4 Z" fill="#4f93d6"/>
<!-- project info -->
<rect x="759.6" y="39" width="19.6" height="17" rx="1" fill="#f3efe9" stroke="#c2bdb6" stroke-width="1"/>
<rect x="759.6" y="39" width="19.6" height="3.4" fill="#8e5fc0"/>
<path d="M760.6,40.7 H778.4" stroke="#c9a6e8" stroke-width="1" stroke-dasharray="1.4 1.4"/>
<g fill="#cfcac4"><rect x="766.6" y="44.4" width="3" height="2.6"/><rect x="770.6" y="44.4" width="3" height="2.6"/><rect x="774.6" y="44.4" width="3" height="2.6"/>
<rect x="766.6" y="48" width="3" height="2.6"/><rect x="770.6" y="48" width="3" height="2.6"/><rect x="774.6" y="48" width="3" height="2.6"/>
<rect x="762.4" y="51.6" width="3" height="2.6"/><rect x="766.6" y="51.6" width="3" height="2.6"/><rect x="770.6" y="51.6" width="3" height="2.6"/><rect x="774.6" y="51.6" width="3" height="2.6"/></g>
<rect x="761.8" y="44" width="4.2" height="6.4" fill="#a09a94"/>
<path d="M762.4,49.6 L763.8,45.2 L765.4,49.6 Z" fill="#d8874a"/>
<!-- printer -->
<path d="M880.2,38.4 L888.4,40.6 L885.6,48.8 L877.8,47 Z" fill="#9fd0f4" stroke="#6aa6d8" stroke-width="0.6"/>
<path d="M874.4,48.6 L879,45.6 L892,47.6 L893.4,50.4 L893.4,54.4 L886.4,56.4 L874.4,53.4 Z" fill="#dcdcdc" stroke="#8a8a8a" stroke-width="0.7"/>
<path d="M874.4,50 L886.4,52.8 L893.4,50.6" fill="none" stroke="#7a7a7a" stroke-width="0.8"/>
<path d="M878.4,53 L885,54.6" stroke="#555" stroke-width="1.2"/>
<path d="M878.6,47.2 L886.4,48.8 L888.8,46.8" fill="none" stroke="#666" stroke-width="0.9"/>
<!-- overflow dots -->
<rect x="971.4" y="47.6" width="2.4" height="1.6" fill="#333"/><rect x="975.6" y="47.6" width="2.4" height="1.6" fill="#333"/><rect x="979.8" y="47.6" width="2.4" height="1.6" fill="#333"/>
<!-- funnels -->
<use href="#funnel" x="47" y="118.2"/>
<use href="#funnel" x="230" y="118.2"/>
<use href="#funnel" x="465" y="118.2"/>
<use href="#funnel" x="795" y="118.2"/>
<!-- row pointer -->
<path d="M15.2,605.8 L19.8,609.8 L15.2,613.8 Z" fill="#444"/>
<!-- cursor -->
<path d="M363,527 L363,538.6 L365.8,536.2 L367.8,540.2 L369.4,539.4 L367.4,535.6 L370.8,535.2 Z" fill="#fff" stroke="#111" stroke-width="0.8" stroke-linejoin="round"/>
<!-- references icon -->
<rect x="615.6" y="792.6" width="8" height="10" fill="#f4f4f4" stroke="#b0b0b0" stroke-width="0.8"/>
<rect x="619.6" y="794.6" width="9" height="10.4" fill="#fbfbfb" stroke="#a8a8a8" stroke-width="0.8"/>
<path d="M616.6,799.4 H619" stroke="#e02020" stroke-width="1.4"/>
<path d="M621,800.2 H627.6" stroke="#e02020" stroke-width="1.4" stroke-dasharray="2.6 1"/>
<!-- add plus -->
<path d="M30,831.4 H33.4 V834.2 H36.4 V837.4 H33.4 V840.4 H30 V837.4 H27 V834.2 H30 Z" fill="#4fc23a" stroke="#2e9a22" stroke-width="0.6"/>
<!-- remove x -->
<path d="M94,832.4 L96,830.8 L99.2,833.8 L102.6,830.8 L104.6,832.6 L101.2,835.8 L104.6,839 L102.6,840.8 L99.2,837.8 L96,840.8 L94,839 L97.2,835.8 Z" fill="#d8483a" stroke="#a82a20" stroke-width="0.5"/>
</svg>

</body>
</html>
